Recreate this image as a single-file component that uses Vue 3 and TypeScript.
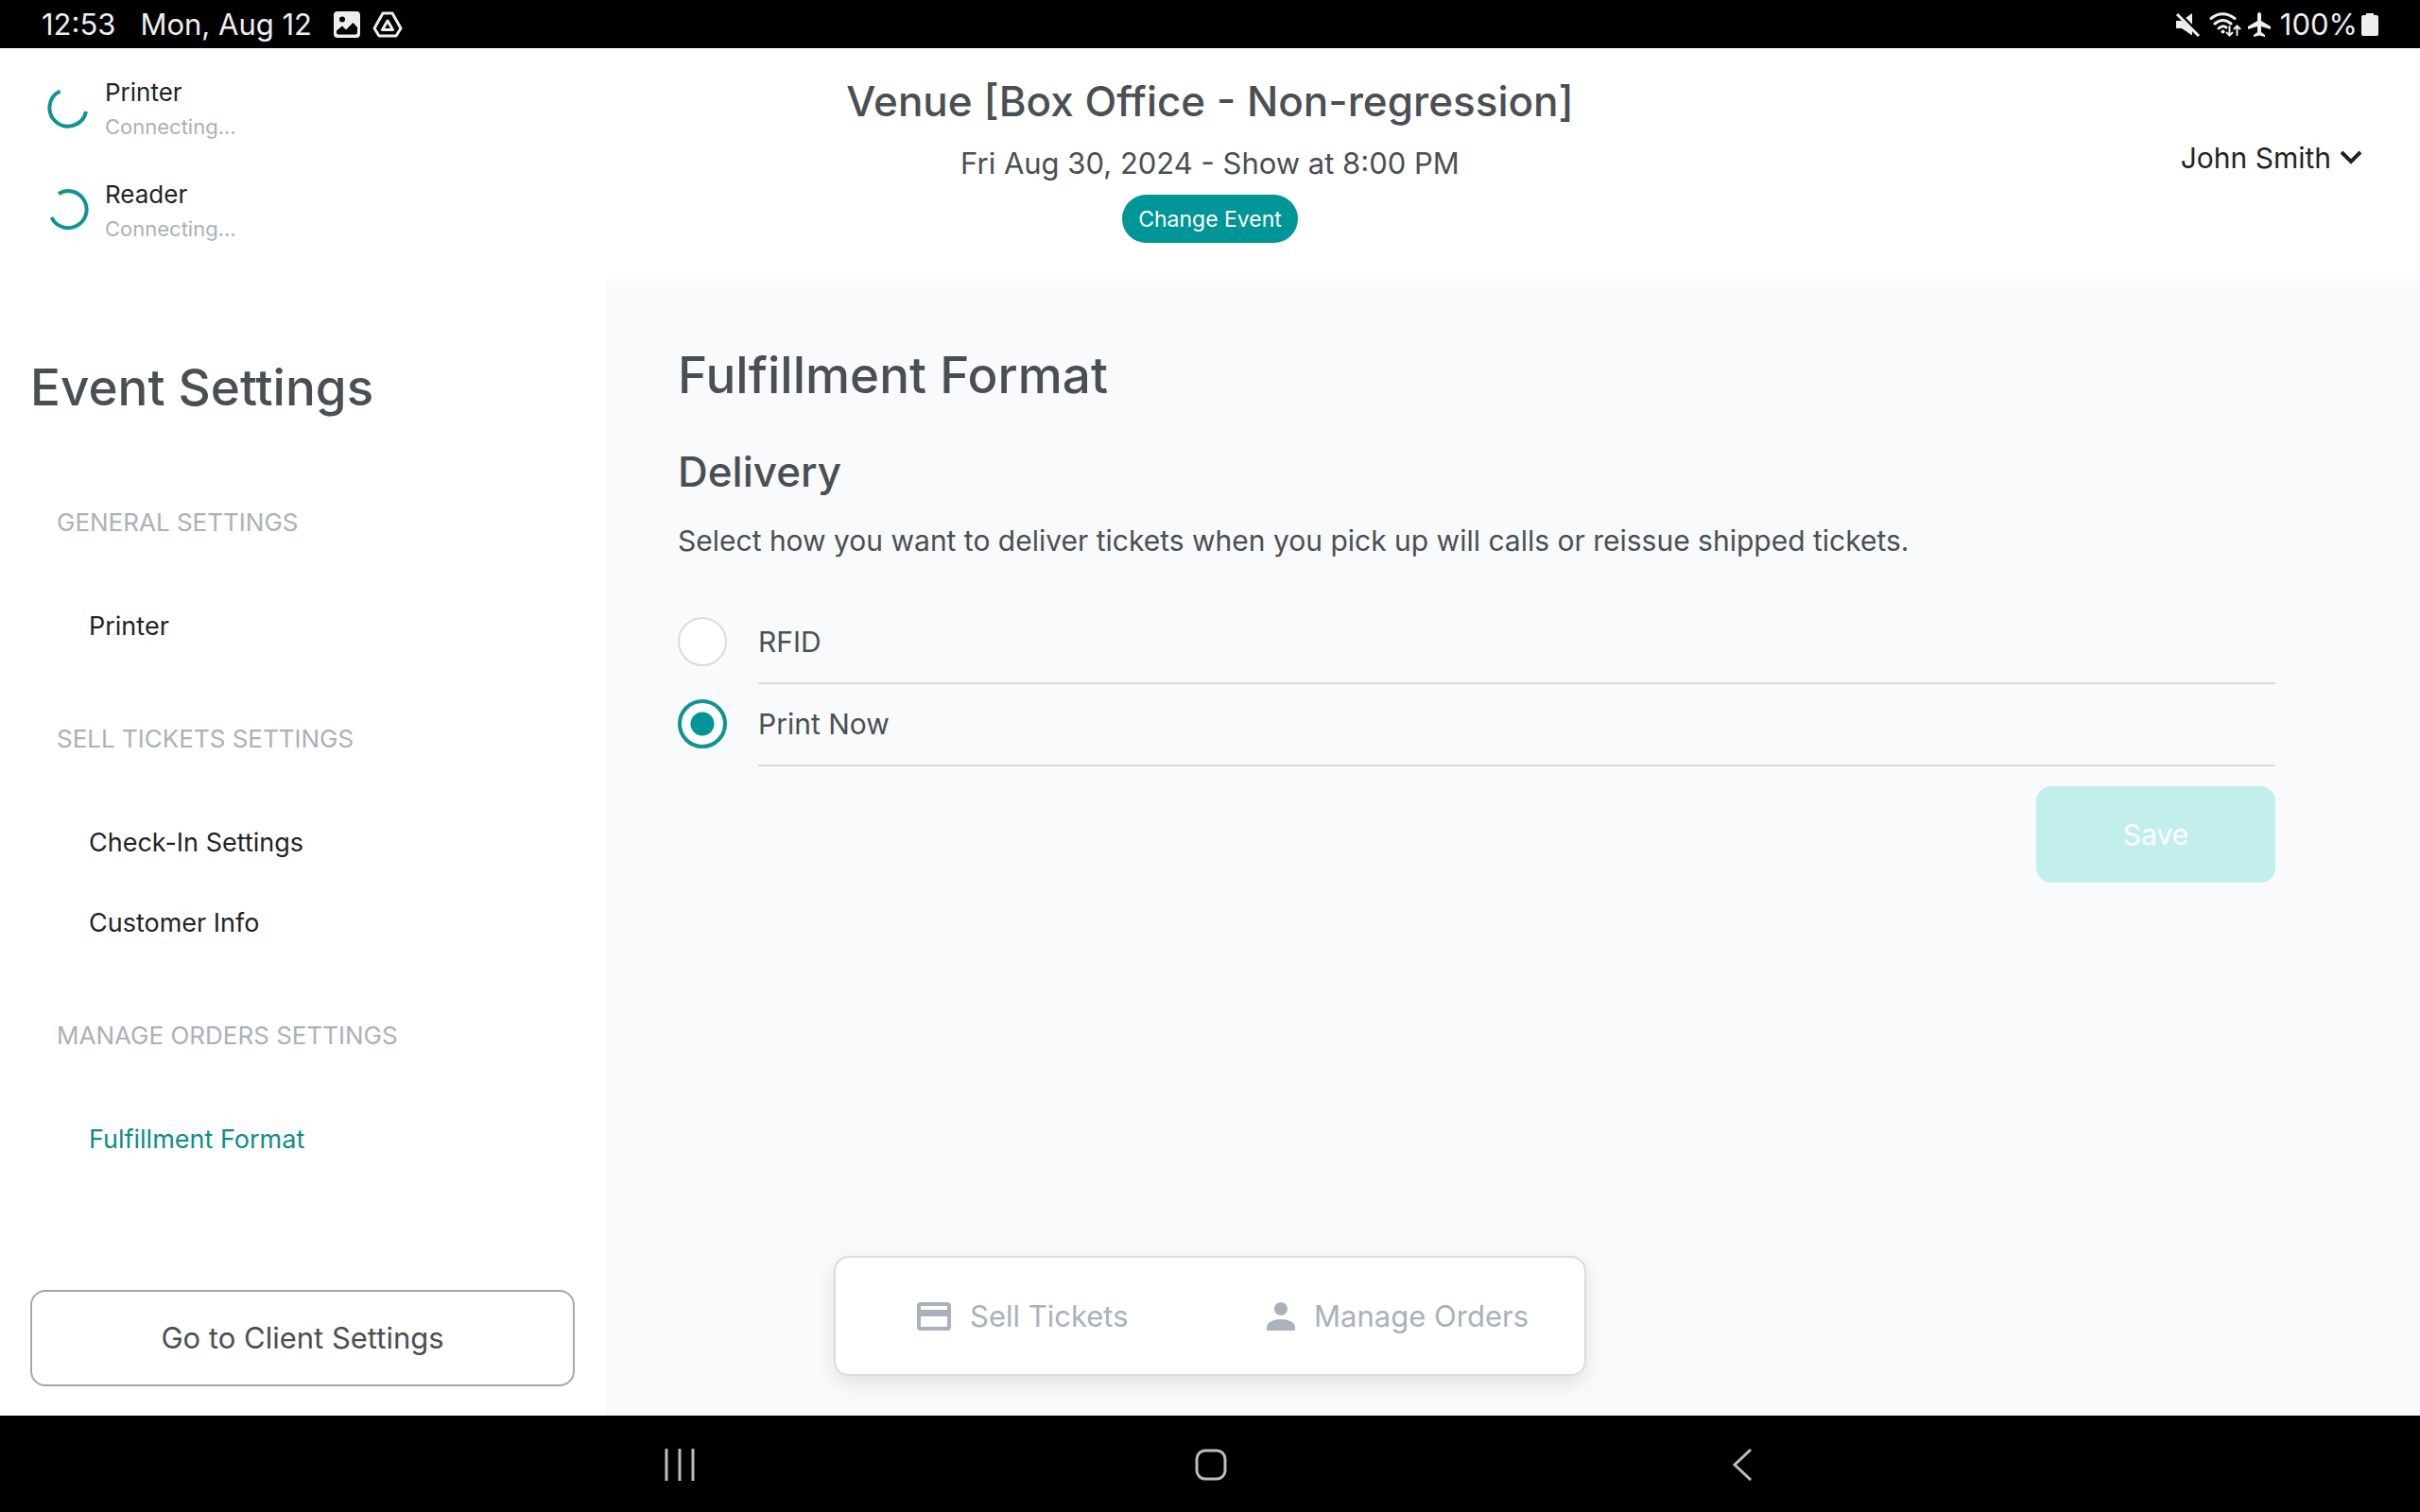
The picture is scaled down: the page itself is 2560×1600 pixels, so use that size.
<script setup lang="ts">
import { ref } from 'vue'

interface Device { name: string; state: string; arc: string }
interface Group { title: string; items: string[] }

const devices: Device[] = [
  { name: 'Printer', state: 'Connecting...', arc: 'M41 26A19.500 19.500 0 1 1 13.500 4.500' },
  { name: 'Reader', state: 'Connecting...', arc: 'M12 5A19.500 19.500 0 1 1 4.500 30' },
]

const groups: Group[] = [
  { title: 'GENERAL SETTINGS', items: ['Printer'] },
  { title: 'SELL TICKETS SETTINGS', items: ['Check-In Settings', 'Customer Info'] },
  { title: 'MANAGE ORDERS SETTINGS', items: ['Fulfillment Format'] },
]
const activeItem = ref('Fulfillment Format')

const formats = ['RFID', 'Print Now']
const selected = ref('Print Now')
</script>

<template>
  <div class="screen">
    <div class="status-bar">
      <div class="status-side">
        <span>12:53</span>
        <span class="date">Mon, Aug 12</span>
        <svg class="notif" width="28" height="28" viewBox="0 0 28 28">
          <path fill="#eee" fill-rule="evenodd" d="M4 0h20a4 4 0 0 1 4 4v20a4 4 0 0 1-4 4H4a4 4 0 0 1-4-4V4a4 4 0 0 1 4-4zM9 5.500a3 3 0 1 0 0 6a3 3 0 0 0 0-6zM3 22.500q0 2 2 2h18q2 0 2-2V17l-4.500-5l-7.500 7.500l-4-4L3 20.500z" />
        </svg>
        <svg class="drive" width="32" height="28" viewBox="0 0 32 28" fill="none" stroke="#eee" stroke-width="3" stroke-linejoin="round">
          <path d="M11 2h10l9 16l-5 8H7l-5-8z" />
          <path d="M16 10l5.500 9.500h-11z" />
        </svg>
      </div>
      <div class="status-side">
        <svg width="26" height="26" viewBox="0 0 26 26">
          <path fill="#eee" d="M1 9h6l11-8v19L12 19L7 17H1z" />
          <path d="M1 0L26 25" stroke="#000" stroke-width="6" />
          <path d="M2 2L25 25" stroke="#eee" stroke-width="3" />
          <path fill="#eee" d="M1 9h6l11 10v5.500L7 17H1z" />
        </svg>
        <svg class="wifi" width="34" height="26" viewBox="0 0 34 26" fill="none" stroke="#eee" stroke-width="3" stroke-linecap="round">
          <path d="M2 6.500Q14-3 27 6.500M6 12Q14.500 5 23 12M10 17Q14.500 13 18 16" />
          <circle cx="14.500" cy="20.500" r="2" fill="#eee" stroke="none" />
          <path stroke-width="2" d="M21.500 15v9M18.500 21.500l3 3l3-3M29.500 24v-9M26.500 17.500l3-3l3 3" />
        </svg>
        <svg class="plane" width="26" height="26" viewBox="0 0 26 26">
          <path fill="#eee" d="M13 0q2 0 2 3v6l10 6v3l-10-3v6l4 3v2l-6-1.500L7 26v-2l4-3v-6L1 18v-3l10-6V3q0-3 2-3z" />
        </svg>
        <span>100%</span>
        <svg class="battery" width="18" height="26" viewBox="0 0 18 26">
          <path fill="#eee" d="M5 1h8v2h3q2 0 2 2v18q0 2-2 2H2q-2 0-2-2V5q0-2 2-2h3z" />
        </svg>
      </div>
    </div>

    <header class="top">
      <ul class="devices">
        <li v-for="d in devices" :key="d.name">
          <svg width="44" height="44" viewBox="0 0 44 44" fill="none" stroke="#0e9492" stroke-width="4">
            <path :d="d.arc" />
          </svg>
          <div>
            <div class="device-name">{{ d.name }}</div>
            <div class="device-state">{{ d.state }}</div>
          </div>
        </li>
      </ul>
      <div class="event">
        <h1>Venue [Box Office - Non-regression]</h1>
        <p>Fri Aug 30, 2024 - Show at 8:00 PM</p>
        <button class="change" type="button">Change Event</button>
      </div>
      <button class="user" type="button">
        John Smith
        <svg width="24" height="16" viewBox="0 0 24 16" fill="none" stroke="#1f2326" stroke-width="4">
          <path d="M2 2l10 10l10-10" />
        </svg>
      </button>
    </header>

    <div class="body">
      <aside class="sidebar">
        <h2>Event Settings</h2>
        <nav>
          <section v-for="g in groups" :key="g.title">
            <h3>{{ g.title }}</h3>
            <a
              v-for="item in g.items"
              :key="item"
              href="#"
              :class="{ active: item === activeItem }"
              @click.prevent="activeItem = item"
            >{{ item }}</a>
          </section>
        </nav>
        <button class="client" type="button">Go to Client Settings</button>
      </aside>

      <main class="content">
        <h2>Fulfillment Format</h2>
        <h3>Delivery</h3>
        <p>Select how you want to deliver tickets when you pick up will calls or reissue shipped tickets.</p>
        <form @submit.prevent>
          <label v-for="f in formats" :key="f" class="option">
            <input v-model="selected" type="radio" name="format" :value="f">
            <span>{{ f }}</span>
          </label>
          <button class="save" type="submit" disabled>Save</button>
        </form>
      </main>
    </div>

    <nav class="tabs">
      <a href="#">
        <svg width="36" height="30" viewBox="0 0 36 30" fill="#a9b1bb">
          <path fill-rule="evenodd" d="M4 0h28a4 4 0 0 1 4 4v22a4 4 0 0 1-4 4H4a4 4 0 0 1-4-4V4a4 4 0 0 1 4-4zM4 4v4h28V4zM4 15v11h28V15z" />
        </svg>
        Sell Tickets
      </a>
      <a href="#">
        <svg width="30" height="30" viewBox="0 0 30 30" fill="#a9b1bb">
          <circle cx="15" cy="7" r="7" />
          <path d="M0 30v-4c0-5 8-8 15-8s15 3 15 8v4z" />
        </svg>
        Manage Orders
      </a>
    </nav>

    <div class="nav-bar">
      <button type="button" aria-label="Recent apps">
        <svg width="34" height="34" viewBox="0 0 34 34" stroke="#bbb" stroke-width="3"><path d="M3 0v34M17 0v34M31 0v34" /></svg>
      </button>
      <button type="button" aria-label="Home">
        <svg width="34" height="34" viewBox="0 0 34 34" fill="none" stroke="#bbb" stroke-width="3"><rect x="2" y="2" width="30" height="30" rx="9" /></svg>
      </button>
      <button type="button" aria-label="Back">
        <svg width="34" height="34" viewBox="0 0 34 34" fill="none" stroke="#bbb" stroke-width="3"><path d="M26 1L9 17l17 16" /></svg>
      </button>
    </div>
  </div>
</template>

<style>
body {
  margin: 0;
}
</style>

<style scoped>
.screen {
  --teal: #009698;
  --ink: #4a4f54;
  --muted: #abb1b8;
  position: relative;
  display: flex;
  flex-direction: column;
  min-height: 100vh;
  background: #fff;
  color: var(--ink);
  font: 400 30px/40px Inter, "Liberation Sans", sans-serif;
}
h1, h2, h3, p, ul {
  margin: 0;
  padding: 0;
  font-weight: 400;
}
a {
  color: inherit;
  text-decoration: none;
}
button {
  border: 0;
  padding: 0;
  background: none;
  color: inherit;
  font: inherit;
}
svg {
  flex: none;
}

.status-bar {
  display: flex;
  justify-content: space-between;
  align-items: center;
  height: 51px;
  padding: 0 44px;
  background: #000;
  color: #eee;
  font-size: 31px;
}
.status-side {
  display: flex;
  align-items: center;
}
.date { margin-left: 26px; }
.notif { margin-left: 23px; }
.drive { margin-left: 13px; }
.wifi { margin-left: 10px; }
.plane { margin: 0 9px 0 6px; }
.battery { margin-left: 4px; }

.top {
  display: grid;
  grid-template-columns: 1fr auto 1fr;
  height: 246px;
}
.devices {
  padding: 29px 0 0 50px;
  list-style: none;
}
.devices li {
  display: flex;
  align-items: flex-start;
  gap: 17px;
  height: 72px;
  margin-bottom: 36px;
}
.devices svg {
  margin-top: 12px;
}
.device-name {
  color: #1f2326;
  font-size: 26px;
  line-height: 36px;
}
.device-state {
  color: var(--muted);
  font-size: 22px;
  line-height: 36px;
}
.event {
  display: flex;
  flex-direction: column;
  align-items: center;
  padding-top: 24px;
}
.event h1 {
  font-size: 44px;
  font-weight: 500;
  line-height: 64px;
}
.event p {
  padding: 14px 0 13px;
  font-size: 31px;
}
.change {
  height: 51px;
  padding: 0 17px;
  border-radius: 26px;
  background: var(--teal);
  color: #fff;
  font-size: 23px;
}
.user {
  display: flex;
  align-items: center;
  justify-self: end;
  gap: 9px;
  height: 40px;
  margin: 96px 61px 0 0;
  color: #1f2326;
}

.body {
  display: flex;
  flex: 1;
}
.sidebar {
  display: flex;
  flex-direction: column;
  box-sizing: border-box;
  width: 25%;
  padding: 81px 32px 31px;
}
.sidebar h2 {
  font-size: 53px;
  font-weight: 500;
  line-height: 64px;
}
.sidebar section {
  padding-top: 35px;
  padding-left: 28px;
}
.sidebar section:first-child {
  padding-top: 69px;
}
.sidebar h3 {
  margin-bottom: 25px;
  color: var(--muted);
  font-size: 26px;
  line-height: 84px;
}
.sidebar a {
  display: block;
  padding-left: 34px;
  color: #1f2326;
  font-size: 27px;
  line-height: 85px;
}
.sidebar a.active {
  color: #0e8c88;
}
.client {
  height: 102px;
  margin-top: auto;
  border: 2px solid #a5a7a9;
  border-radius: 16px;
  font-size: 31px;
}

.content {
  flex: 1;
  padding: 68px 153px 0 77px;
  background: #f9fafb;
}
.content h2 {
  font-size: 53px;
  font-weight: 500;
  line-height: 64px;
}
.content h3 {
  margin-top: 40px;
  font-size: 44px;
  font-weight: 500;
  line-height: 60px;
}
.content p {
  margin: 23px 0 45px;
}
.option {
  display: flex;
  gap: 33px;
  height: 87px;
}
.option input {
  flex: none;
  appearance: none;
  box-sizing: border-box;
  width: 52px;
  height: 52px;
  margin: 16px 0 0;
  border: 2px solid #d9dbdd;
  border-radius: 50%;
  background: #fff;
}
.option input:checked {
  border: 4px solid #0e9492;
  background: radial-gradient(circle, var(--teal) 12px, #fff 13px);
}
.option span {
  flex: 1;
  border-bottom: 2px solid #d9dbdd;
  line-height: 85px;
}
.save {
  display: block;
  width: 253px;
  height: 102px;
  margin: 21px 0 0 auto;
  border-radius: 16px;
  background: #c2eeeb;
  color: #fff;
}

.tabs {
  position: absolute;
  bottom: 144px;
  left: 50%;
  display: flex;
  justify-content: space-between;
  align-items: center;
  box-sizing: border-box;
  width: 796px;
  height: 127px;
  padding: 0 59px 0 86px;
  border: 2px solid #dadcde;
  border-radius: 16px;
  background: #fff;
  box-shadow: 0 8px 20px rgba(0, 0, 0, 0.1);
  color: #a9b1bb;
  font-size: 31px;
  transform: translateX(-50%);
}
.tabs a {
  display: flex;
  align-items: center;
  gap: 20px;
}

.nav-bar {
  display: flex;
  justify-content: center;
  align-items: center;
  gap: 528px;
  box-sizing: border-box;
  height: 102px;
  padding: 2px 0 0 2px;
  background: #000;
}
.nav-bar button {
  display: flex;
}
</style>
